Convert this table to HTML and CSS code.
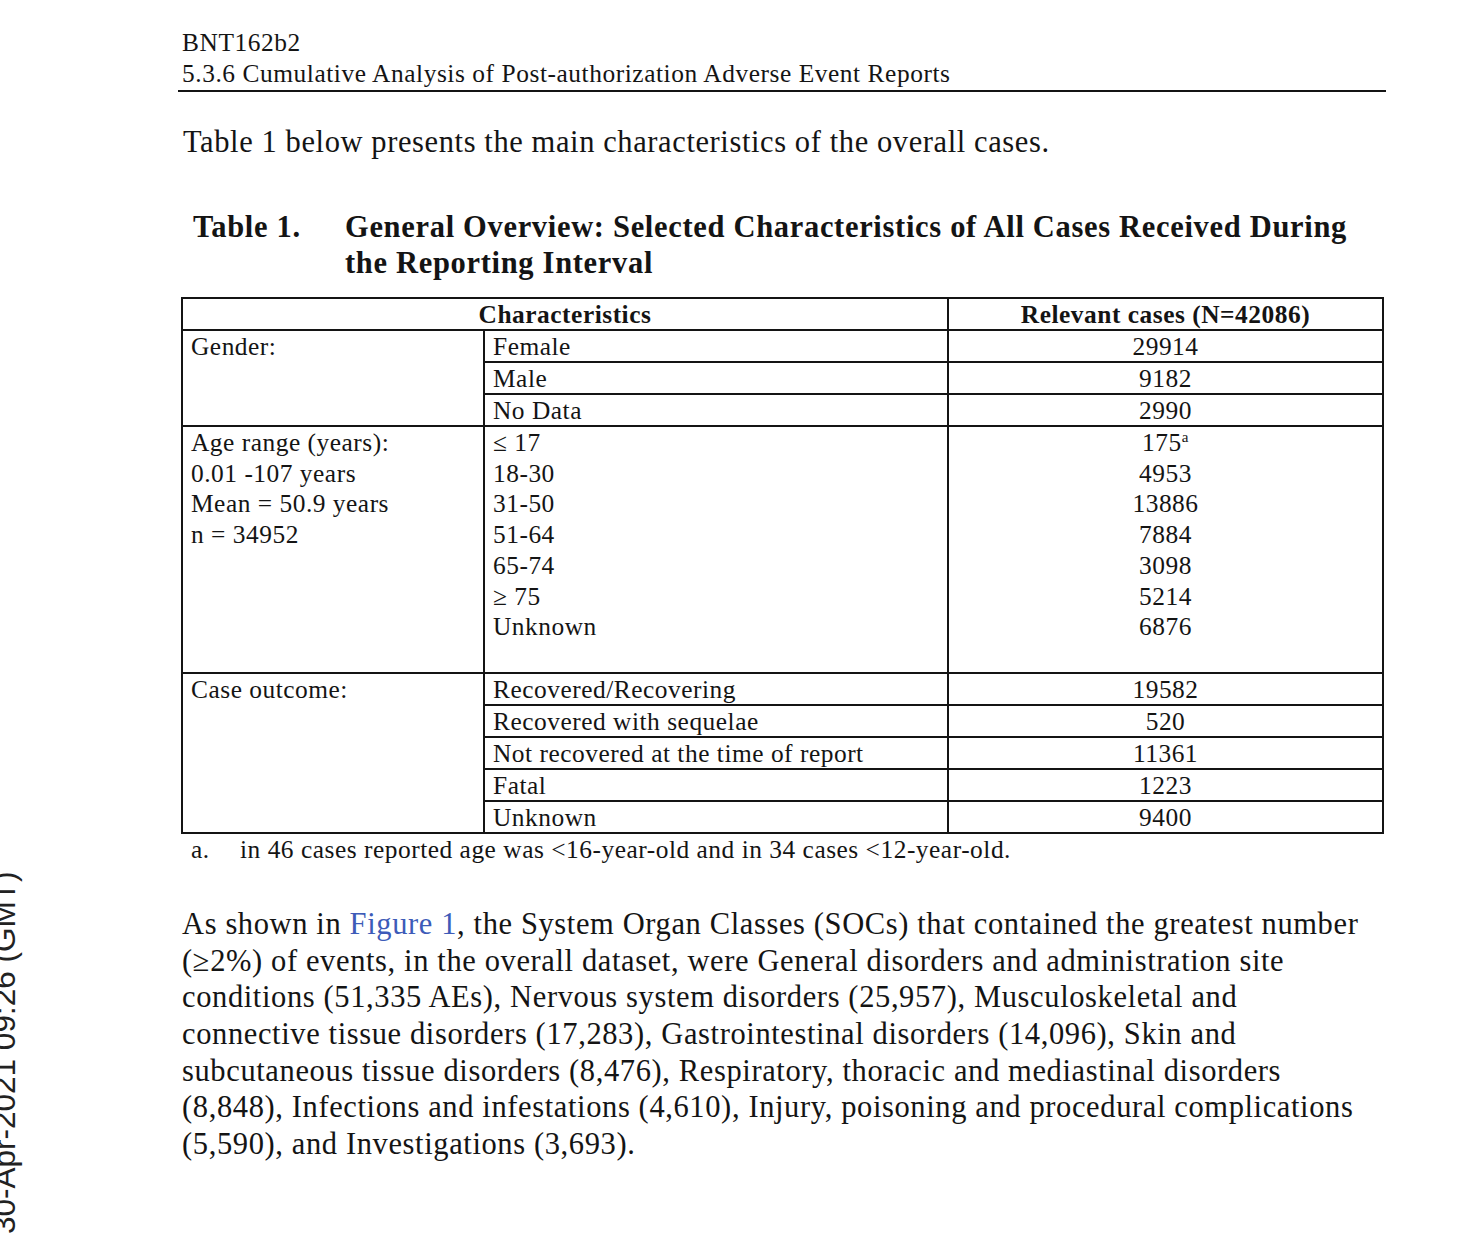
FILE: index.html
```html
<!DOCTYPE html>
<html lang="en">
<head>
<meta charset="utf-8">
<title>BNT162b2 - Cumulative Analysis</title>
<link rel="stylesheet" href="styles.css">
</head>
<body>
<div class="stamp">30-Apr-2021 09:26 (GMT)</div>
<div class="page">
  <header class="doc-header">
    <div class="doc-line">BNT162b2</div>
    <div class="doc-line">5.3.6 Cumulative Analysis of Post-authorization Adverse Event Reports</div>
  </header>

  <p class="intro">Table 1 below presents the main characteristics of the overall cases.</p>

  <div class="caption">
    <span class="cap-label">Table 1.</span>
    <span class="cap-text">General Overview: Selected Characteristics of All Cases Received During<br>the Reporting Interval</span>
  </div>

  <table class="data">
    <colgroup><col class="c1"><col class="c2"><col class="c3"></colgroup>
    <thead>
      <tr><th colspan="2">Characteristics</th><th>Relevant cases (N=42086)</th></tr>
    </thead>
    <tbody>
      <tr><td rowspan="3">Gender:</td><td>Female</td><td class="num">29914</td></tr>
      <tr><td>Male</td><td class="num">9182</td></tr>
      <tr><td>No Data</td><td class="num">2990</td></tr>
      <tr>
        <td class="multi">Age range (years):<br>0.01 -107 years<br>Mean = 50.9 years<br>n = 34952</td>
        <td class="multi">≤ 17<br>18-30<br>31-50<br>51-64<br>65-74<br>≥ 75<br>Unknown</td>
        <td class="multi num">175<sup class="fn">a</sup><br>4953<br>13886<br>7884<br>3098<br>5214<br>6876</td>
      </tr>
      <tr><td rowspan="5">Case outcome:</td><td>Recovered/Recovering</td><td class="num">19582</td></tr>
      <tr><td>Recovered with sequelae</td><td class="num">520</td></tr>
      <tr><td>Not recovered at the time of report</td><td class="num">11361</td></tr>
      <tr><td>Fatal</td><td class="num">1223</td></tr>
      <tr><td>Unknown</td><td class="num">9400</td></tr>
    </tbody>
  </table>

  <div class="footnote"><span class="fn-mark">a.</span><span class="fn-text">in 46 cases reported age was &lt;16-year-old and in 34 cases &lt;12-year-old.</span></div>

  <p class="body-text">As shown in <span class="link">Figure 1</span>, the System Organ Classes (SOCs) that contained the greatest number<br>(≥2%) of events, in the overall dataset, were General disorders and administration site<br>conditions (51,335 AEs), Nervous system disorders (25,957), Musculoskeletal and<br>connective tissue disorders (17,283), Gastrointestinal disorders (14,096), Skin and<br>subcutaneous tissue disorders (8,476), Respiratory, thoracic and mediastinal disorders<br>(8,848), Infections and infestations (4,610), Injury, poisoning and procedural complications<br>(5,590), and Investigations (3,693).</p>
</div>
</body>
</html>
```

FILE: styles.css
```css
html, body {
  margin: 0;
  padding: 0;
  background: #ffffff;
}

body {
  font-family: "Liberation Serif", "Times New Roman", serif;
  color: #141414;
  width: 1464px;
  height: 1236px;
  overflow: hidden;
  position: relative;
}

.stamp {
  position: absolute;
  left: -11px;
  top: 1234px;
  font-family: "Liberation Sans", Arial, sans-serif;
  font-size: 31.5px;
  line-height: 31px;
  color: #222;
  white-space: nowrap;
  transform: rotate(-90deg);
  transform-origin: top left;
}

.page {
  padding: 27px 0 0 182px;
  width: 1204px;
}

.doc-header {
  font-size: 25.4px;
  line-height: 31px;
  letter-spacing: 0.56px;
  border-bottom: 2px solid #141414;
  margin-left: -4px;
  padding: 0 0 1px 4px;
}

.intro {
  margin: 32px 0 0 1px;
  font-size: 30.5px;
  line-height: 36.7px;
  letter-spacing: 0.6px;
  white-space: nowrap;
}

.caption {
  display: flex;
  margin: 48px 0 0 11px;
  font-weight: bold;
  font-size: 30.5px;
  line-height: 36px;
  letter-spacing: 0.68px;
}

.cap-label {
  width: 152px;
  flex: none;
}

.cap-text {
  white-space: nowrap;
}

.data {
  margin: 16px 0 0 -1px;
  border-collapse: collapse;
  table-layout: fixed;
  width: 1201px;
  font-size: 25.4px;
  line-height: 30px;
  letter-spacing: 0.52px;
}

.c1 { width: 302px; }
.c2 { width: 464px; }
.c3 { width: 435px; }

.data th,
.data td {
  border: 2px solid #141414;
  padding: 0 0 0 8px;
  vertical-align: top;
  text-align: left;
  white-space: nowrap;
}

.data th {
  font-weight: bold;
  text-align: center;
  padding: 0;
}

.data td.num {
  text-align: center;
  padding: 0;
}

.data td.multi {
  line-height: 30.8px;
  padding-bottom: 30px;
}

.fn {
  font-size: 15px;
  line-height: 0;
  vertical-align: 9px;
}

.footnote {
  display: flex;
  font-size: 25.4px;
  line-height: 30px;
  letter-spacing: 0.52px;
  margin-left: 9px;
}

.fn-mark {
  width: 49px;
  flex: none;
}

.body-text {
  margin: 42px 0 0 0;
  font-size: 30.5px;
  line-height: 36.6px;
  letter-spacing: 0.62px;
  white-space: nowrap;
}

.link {
  color: #3d5bb8;
}
```
